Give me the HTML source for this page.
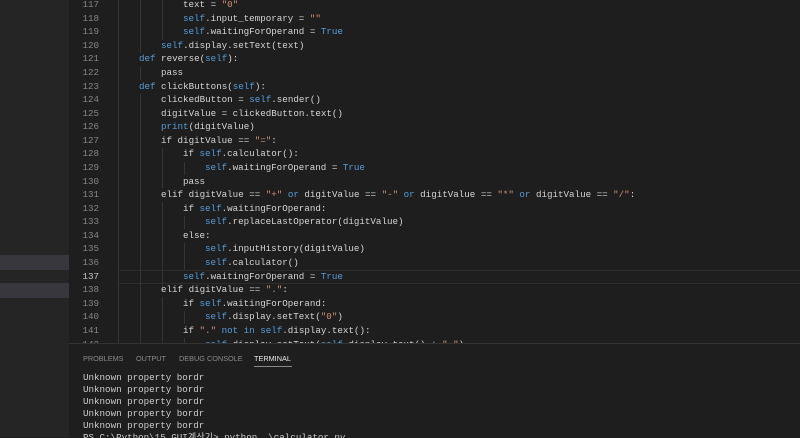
<!DOCTYPE html><html><head><meta charset="utf-8"><style>
body{margin:0;width:800px;height:437px;overflow:hidden;background:#1e1e1e;position:relative;font-family:"Liberation Mono","Noto Sans CJK KR",monospace}
.sb{position:absolute;left:0;top:0;width:69px;height:437px;background:#252526}
.hl{position:absolute;left:0;width:69px;height:15px;background:#37373d}
.ln{position:absolute;left:69px;width:30px;text-align:right;color:#858585;font-size:9.2px;line-height:13.58px;height:13.58px}
.cd{position:absolute;white-space:pre;color:#d4d4d4;font-size:9.2px;line-height:13.58px;height:13.58px}
.k{color:#569cd6}.s{color:#ce9178}
.g{position:absolute;width:1px;background:#353535}
.panel{position:absolute;left:69px;top:343px;width:731px;height:94px;background:#1e1e1e;border-top:1px solid #333;overflow:hidden}
.tab{position:absolute;top:10px;font-family:"Liberation Sans",sans-serif;font-size:7.3px;color:#8a8a8a}
.t{position:absolute;left:14px;white-space:pre;color:#cccccc;font-size:9.2px;line-height:12px}
</style></head><body>
<div class="sb"></div>
<div class="hl" style="top:255px"></div>
<div class="hl" style="top:283px"></div>
<div style="position:absolute;left:118px;top:270px;width:682px;height:12px;border:1px solid #2c2c2c"></div>
<div class="g" style="left:118px;top:0;height:343px"></div>
<div class="g" style="left:140px;top:0;height:53px"></div>
<div class="g" style="left:140px;top:67px;height:13px"></div>
<div class="g" style="left:140px;top:94px;height:249px"></div>
<div class="g" style="left:162px;top:0;height:40px"></div>
<div class="g" style="left:162px;top:148px;height:40px"></div>
<div class="g" style="left:162px;top:202px;height:87px"></div>
<div class="g" style="left:162px;top:297px;height:46px"></div>
<div class="g" style="left:184px;top:162px;height:13px"></div>
<div class="g" style="left:184px;top:216px;height:13px"></div>
<div class="g" style="left:184px;top:243px;height:27px"></div>
<div class="g" style="left:184px;top:311px;height:13px"></div>
<div class="g" style="left:184px;top:338px;height:5px"></div>

<div class="ln" style="top:-2px">117</div><div class="cd" style="top:-2px;left:183px">text = <span class="s">"0"</span></div>
<div class="ln" style="top:11.6px">118</div><div class="cd" style="top:11.6px;left:183px"><span class="k">self</span>.input_temporary = <span class="s">""</span></div>
<div class="ln" style="top:25.2px">119</div><div class="cd" style="top:25.2px;left:183px"><span class="k">self</span>.waitingForOperand = <span class="k">True</span></div>
<div class="ln" style="top:38.7px">120</div><div class="cd" style="top:38.7px;left:161px"><span class="k">self</span>.display.setText(text)</div>
<div class="ln" style="top:52.3px">121</div><div class="cd" style="top:52.3px;left:139px"><span class="k">def</span> reverse(<span class="k">self</span>):</div>
<div class="ln" style="top:65.9px">122</div><div class="cd" style="top:65.9px;left:161px">pass</div>
<div class="ln" style="top:79.5px">123</div><div class="cd" style="top:79.5px;left:139px"><span class="k">def</span> clickButtons(<span class="k">self</span>):</div>
<div class="ln" style="top:93.1px">124</div><div class="cd" style="top:93.1px;left:161px">clickedButton = <span class="k">self</span>.sender()</div>
<div class="ln" style="top:106.6px">125</div><div class="cd" style="top:106.6px;left:161px">digitValue = clickedButton.text()</div>
<div class="ln" style="top:120.2px">126</div><div class="cd" style="top:120.2px;left:161px"><span class="k">print</span>(digitValue)</div>
<div class="ln" style="top:133.8px">127</div><div class="cd" style="top:133.8px;left:161px">if digitValue == <span class="s">"="</span>:</div>
<div class="ln" style="top:147.4px">128</div><div class="cd" style="top:147.4px;left:183px">if <span class="k">self</span>.calculator():</div>
<div class="ln" style="top:161px">129</div><div class="cd" style="top:161px;left:205px"><span class="k">self</span>.waitingForOperand = <span class="k">True</span></div>
<div class="ln" style="top:174.5px">130</div><div class="cd" style="top:174.5px;left:183px">pass</div>
<div class="ln" style="top:188.1px">131</div><div class="cd" style="top:188.1px;left:161px">elif digitValue == <span class="s">"+"</span> <span class="k">or</span> digitValue == <span class="s">"-"</span> <span class="k">or</span> digitValue == <span class="s">"*"</span> <span class="k">or</span> digitValue == <span class="s">"/"</span>:</div>
<div class="ln" style="top:201.7px">132</div><div class="cd" style="top:201.7px;left:183px">if <span class="k">self</span>.waitingForOperand:</div>
<div class="ln" style="top:215.3px">133</div><div class="cd" style="top:215.3px;left:205px"><span class="k">self</span>.replaceLastOperator(digitValue)</div>
<div class="ln" style="top:228.9px">134</div><div class="cd" style="top:228.9px;left:183px">else:</div>
<div class="ln" style="top:242.4px">135</div><div class="cd" style="top:242.4px;left:205px"><span class="k">self</span>.inputHistory(digitValue)</div>
<div class="ln" style="top:256px">136</div><div class="cd" style="top:256px;left:205px"><span class="k">self</span>.calculator()</div>
<div class="ln" style="top:269.6px;color:#c6c6c6">137</div><div class="cd" style="top:269.6px;left:183px"><span class="k">self</span>.waitingForOperand = <span class="k">True</span></div>
<div class="ln" style="top:283.2px">138</div><div class="cd" style="top:283.2px;left:161px">elif digitValue == <span class="s">"."</span>:</div>
<div class="ln" style="top:296.8px">139</div><div class="cd" style="top:296.8px;left:183px">if <span class="k">self</span>.waitingForOperand:</div>
<div class="ln" style="top:310.3px">140</div><div class="cd" style="top:310.3px;left:205px"><span class="k">self</span>.display.setText(<span class="s">"0"</span>)</div>
<div class="ln" style="top:323.9px">141</div><div class="cd" style="top:323.9px;left:183px">if <span class="s">"."</span> <span class="k">not in</span> <span class="k">self</span>.display.text():</div>
<div class="ln" style="top:337.5px">142</div><div class="cd" style="top:337.5px;left:205px"><span class="k">self</span>.display.setText(<span class="k">self</span>.display.text() + <span class="s">"."</span>)</div>

<div class="panel">
<div class="tab" style="left:14px">PROBLEMS</div>
<div class="tab" style="left:67px">OUTPUT</div>
<div class="tab" style="left:110px">DEBUG CONSOLE</div>
<div class="tab" style="left:185px;color:#e7e7e7">TERMINAL</div>
<div style="position:absolute;left:185px;top:22px;width:38px;height:1px;background:#888"></div>
<div class="t" style="top:28px">Unknown property bordr
Unknown property bordr
Unknown property bordr
Unknown property bordr
Unknown property bordr
PS C:\Python\15_GUI계산기&gt; python .\calculator.py</div>
</div>
</body></html>
